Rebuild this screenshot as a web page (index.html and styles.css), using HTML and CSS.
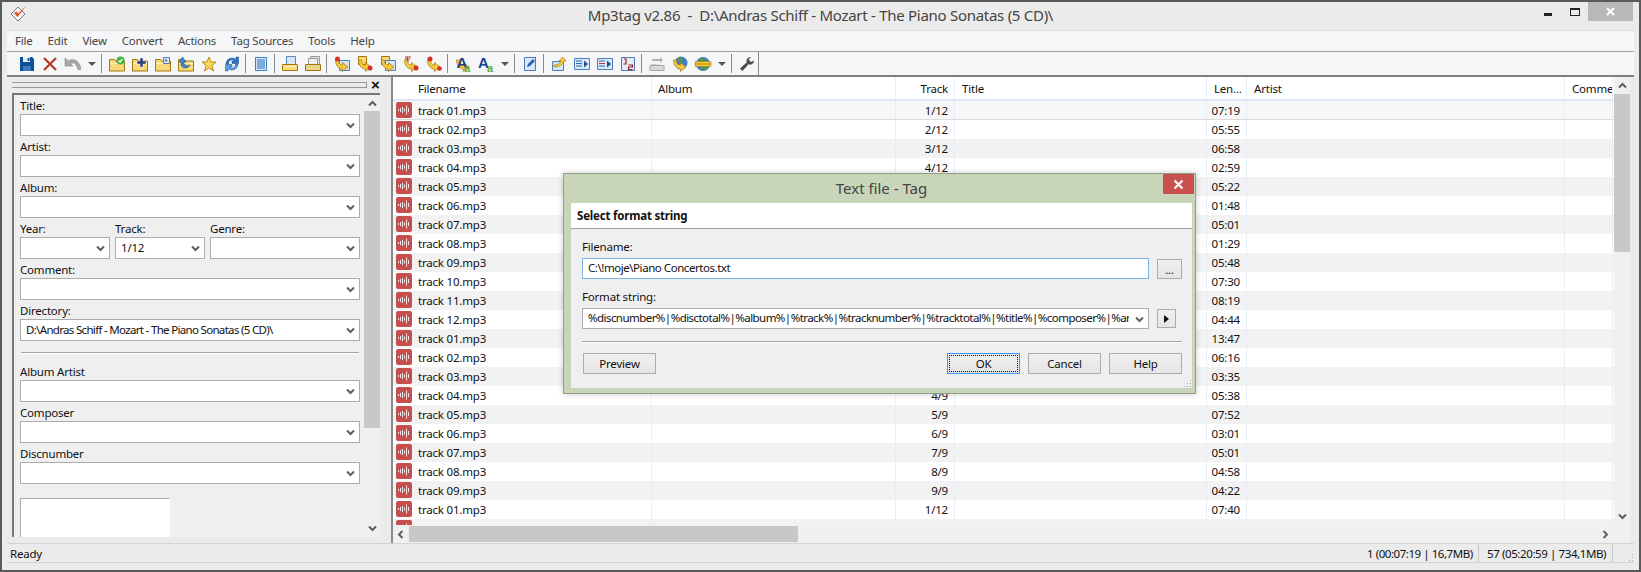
FILE: index.html
```html
<!DOCTYPE html>
<html lang="en">
<head>
    <meta charset="UTF-8">
    <title>Mp3tag v2.86</title>
    <link rel="stylesheet" href="styles.css">
</head>
<body>
    <svg class="defs" width="0" height="0">
        <symbol id="folder" viewBox="0 0 16 16"><path d="M.5 5V3.500h5l1 1.500h9v10H.5z" fill="#f8d978" stroke="#a5760e"/><path d="M1.500 7h13v1h-13z" fill="#fff2bd"/></symbol>
        <symbol id="page" viewBox="0 0 16 16"><path d="M5.500 4.500h10v10h-10z" fill="#d5e4f7" stroke="#4f7db8"/></symbol>
        <symbol id="arrow" viewBox="0 0 16 16"><path d="M1.500 4h3c0 3 1 5 4 5V6.500l5.500 4.500-5.500 4.500V13c-4 0-7-4-7-9z" fill="#f6c93a" stroke="#a5760e" stroke-width=".7"/></symbol>
        <symbol id="audio" viewBox="0 0 16 16"><rect width="16" height="16" rx="2" fill="#c44f4e"/><path d="M2.500 7v2M4.500 6v4M6.500 5v6M8.500 6.500v3M10.500 3.500v9M12.500 6v4" stroke="#fff" stroke-width="1" opacity=".85"/></symbol>
        <symbol id="chev" viewBox="0 0 9 7"><path d="M1 1.500l3.500 3.500 3.500-3.500" fill="none" stroke="#5f5f5f" stroke-width="2"/></symbol>
    </svg>

    <div class="window">
        <div class="titlebar">
            <svg class="app-icon" viewBox="0 0 18 18"><path d="M1 9l7-7 7 7-7 7z" fill="#f4f4f4" stroke="#777"/><path d="M4 8l3.500 4L16 1 8 8.500 6.500 6.500z" fill="#e2571d"/></svg>
            <div class="title">Mp3tag v2.86  -  D:\Andras Schiff - Mozart - The Piano Sonatas (5 CD)\</div>
            <div class="win-buttons">
                <span class="win-btn"><i class="min-mark"></i></span>
                <span class="win-btn"><i class="max-mark"></i></span>
                <span class="win-btn win-close"><svg width="11" height="11" viewBox="0 0 11 11"><path d="M2 2l7 7M9 2l-7 7" stroke="#fff" stroke-width="2"/></svg></span>
            </div>
        </div>

        <div class="inner">
            <div class="menubar">
                <span>File</span><span>Edit</span><span>View</span><span>Convert</span><span>Actions</span><span>Tag Sources</span><span>Tools</span><span>Help</span>
            </div>

            <div class="toolbar">
                <span class="tool"><svg viewBox="0 0 16 16"><path d="M1 1h12l2 2v12H1z" fill="#0f4f97"/><path d="M4 1h7v5H4z" fill="#e6eef7"/><path d="M8.500 2h2v3h-2z" fill="#0f4f97"/><path d="M4 10h8v5H4z" fill="#3c78bd"/></svg></span>
                <span class="tool"><svg viewBox="0 0 16 16"><path d="M2 2l12 12M14 2L2 14" stroke="#b4402c" stroke-width="2.400"/></svg></span>
                <span class="tool"><svg viewBox="0 0 16 16"><path d="M0 2v8h8L5.500 7.500C8 6 11.500 7 13 14l3-1C15 6 9 1 3.500 5z" fill="#a8a8a8" stroke="#8a8a8a" stroke-width=".6"/></svg></span>
                <span class="drop"></span>
                <span class="sep"></span>
                <span class="tool"><svg viewBox="0 0 16 16"><use href="#folder"/><circle cx="11.500" cy="4.500" r="4" fill="#3cb43c"/><path d="M9.500 4.500l1.500 1.500 2.500-3" fill="none" stroke="#fff" stroke-width="1.300"/></svg></span>
                <span class="tool"><svg viewBox="0 0 16 16"><use href="#folder"/><path d="M8 2h3v3h3v3h-3v3H8V8H5V5h3z" fill="#33407f" stroke="#fff" stroke-width=".4"/></svg></span>
                <span class="tool"><svg viewBox="0 0 16 16"><use href="#folder"/><path d="M8.500 1.500h6v6h-6z" fill="#d5e4f7" stroke="#4f7db8"/><path d="M10.500 3v3l2-1.500z" fill="#1b4f8f"/></svg></span>
                <span class="tool"><svg viewBox="0 0 16 16"><use href="#folder"/><path d="M1 6l3.500-5L8 6H6v2c1 2 4 2 6 1-1 2-3 3-5 3-2 0-4-2-4-4V6z" fill="#3f86cf" stroke="#174f8f" stroke-width=".6"/></svg></span>
                <span class="tool"><svg viewBox="0 0 16 16"><path d="M8 1l2 5h5l-4 3.500L12.500 15 8 11.700 3.500 15 5 9.500 1 6h5z" fill="#fbd85a" stroke="#b98a16"/></svg></span>
                <span class="tool"><svg viewBox="0 0 16 16"><path d="M2 8a6 6 0 0 1 10-4.500V1h2.500v6.500H8V5h2.500A3.500 3.500 0 0 0 4.500 8z" fill="#2e74c6" stroke="#12488c" stroke-width=".5"/><path d="M14 8a6 6 0 0 1-10 4.500V15H1.500V8.500H8V11H5.500a3.500 3.500 0 0 0 6-3z" fill="#5aa0e6" stroke="#12488c" stroke-width=".5"/></svg></span>
                <span class="sep"></span>
                <span class="tool"><svg viewBox="0 0 16 16"><path d="M2.500 1.500h11v13h-11z" fill="#d8e8fa" stroke="#3f7fc6"/><path d="M4 4h8M4 6h8M4 8h8M4 10h8M4 12h8" stroke="#2b6cb8"/></svg></span>
                <span class="sep"></span>
                <span class="tool"><svg viewBox="0 0 16 16"><path d="M4.500 .5h9v9h-9z" fill="#d5e4f7" stroke="#5c87bd"/><path d="M.5 8.500h15v6H.5z" fill="#f8d978" stroke="#a5760e"/><path d="M1.500 10h13v1h-13z" fill="#fff2bd"/></svg></span>
                <span class="tool"><svg viewBox="0 0 16 16"><path d="M5.500 .5h9v9h-9z" fill="#e4e4e4" stroke="#999"/><path d="M3.500 2.500h9v8h-9z" fill="#eee" stroke="#999"/><path d="M.5 8.500h15v6H.5z" fill="#e8d487" stroke="#a5760e"/></svg></span>
                <span class="sep"></span>
                <span class="tool"><svg viewBox="0 0 16 16"><use href="#page"/><use href="#arrow"/><circle cx="3.500" cy="3" r="2.500" fill="#d6322a"/></svg></span>
                <span class="tool"><svg viewBox="0 0 16 16"><path d="M1.500 .5h8v8h-8z" fill="#f8d978" stroke="#a5760e"/><use href="#arrow"/><circle cx="13" cy="12" r="2.500" fill="#d6322a"/></svg></span>
                <span class="tool"><svg viewBox="0 0 16 16"><path d="M1.500 .5h8v8h-8z" fill="#f8d978" stroke="#a5760e"/><use href="#page"/><use href="#arrow"/></svg></span>
                <span class="tool"><svg viewBox="0 0 16 16"><path d="M2 1h6M2 3h5M2 5h4M4.500 1v5" stroke="#a6402a"/><use href="#arrow"/><circle cx="13" cy="12" r="2.500" fill="#d6322a"/></svg></span>
                <span class="tool"><svg viewBox="0 0 16 16"><use href="#arrow"/><circle cx="4" cy="3" r="2.500" fill="#d6322a"/><circle cx="13.500" cy="12.500" r="2.300" fill="#d6322a"/></svg></span>
                <span class="sep"></span>
                <span class="tool"><svg viewBox="0 0 16 16"><use href="#arrow"/><text x="1.500" y="11.500" class="ico-big">A</text><text x="9" y="16" class="ico-small">a</text></svg></span>
                <span class="tool"><svg viewBox="0 0 16 16"><text x="0" y="12" class="ico-big">A</text><text x="9" y="16" class="ico-small">a</text></svg></span>
                <span class="drop"></span>
                <span class="sep"></span>
                <span class="tool"><svg viewBox="0 0 16 16"><path d="M2.500 1.500h11v13h-11z" fill="#d8e8fa" stroke="#4f7db8"/><path d="M5 11l1-3 5-5 2 2-5 5z" fill="#2462b0"/><path d="M12 1h2v2z" fill="#c8322a"/></svg></span>
                <span class="sep"></span>
                <span class="tool"><svg viewBox="0 0 16 16"><path d="M1.500 5.500h11v9h-11z" fill="#d5e4f7" stroke="#4f7db8"/><path d="M3 9c3 0 6-1 7-4H8l3.500-4L15 5h-2c-1 4-5 6-10 6z" fill="#f6c93a" stroke="#a5760e" stroke-width=".6"/></svg></span>
                <span class="tool"><svg viewBox="0 0 16 16"><path d="M.5 2.500h15v11H.5z" fill="#d8e8fa" stroke="#4f7db8"/><path d="M2 5h6M2 7.500h6M2 10h6" stroke="#2b6cb8"/><path d="M10 4.500v7l4-3.500z" fill="#1b4f8f"/></svg></span>
                <span class="tool"><svg viewBox="0 0 16 16"><path d="M.5 2.500h15v11H.5z" fill="#d8e8fa" stroke="#4f7db8"/><path d="M2 5h6M2 10h6" stroke="#2b6cb8"/><path d="M2 7.500h6" stroke="#c8322a"/><path d="M10 4.500v7l4-3.500z" fill="#1b4f8f"/></svg></span>
                <span class="tool"><svg viewBox="0 0 16 16"><path d="M1.500 1.500h13v13h-13z" fill="#e2ecf8" stroke="#4f7db8"/><path d="M4 3h2v5M3.500 8h3" fill="none" stroke="#9c1f1f" stroke-width="1.200"/><path d="M8.500 9h4v2h-4v2.500h4" fill="none" stroke="#9c1f1f" stroke-width="1.200"/></svg></span>
                <span class="sep"></span>
                <span class="tool"><svg viewBox="0 0 16 16"><path d="M1 9.500h14v5H1z" fill="#d8d8d8" stroke="#a8a8a8"/><path d="M3 3h8V1l3 3-3 3V5H3zM13 9H5v2L2 8z" fill="#b4b4b4"/></svg></span>
                <span class="tool"><svg viewBox="0 0 16 16"><circle cx="9" cy="7" r="6.500" fill="#3f7fc6"/><path d="M6 2c3-1 5 0 5 2s-3 1-3 3 3 1 4 3-2 3-3 3z" fill="#4f9a3f"/><use href="#arrow"/></svg></span>
                <span class="tool"><svg viewBox="0 0 16 16"><circle cx="8" cy="8" r="7" fill="#3f7fc6"/><path d="M4 2.500c3-1 6 0 6 2s-3 1-3 3 4 1 5 3-3 4-5 4z" fill="#4f9a3f"/><path d="M0 8h16V5.500H0zM16 8v2.500H0V8z" fill="#f6c93a" stroke="#a5760e" stroke-width=".5"/></svg></span>
                <span class="drop"></span>
                <span class="sep"></span>
                <span class="tool"><svg viewBox="0 0 16 16"><path d="M15 4.500a4 4 0 0 1-5.500 3.800L3.500 15 1 12.500l6.700-6A4 4 0 0 1 12 1L9.500 3.500 12 6z" fill="#4a4a4a"/></svg></span>
                <span class="sep last"></span>
            </div>

            <div class="workspace">
                <div class="side">
                    <div class="gripper"><span class="grip-lines"></span><span class="grip-x">×</span></div>
                    <div class="tag-panel">
                        <div class="tag-form">
                            <div class="field"><label>Title:</label><div class="combo"><svg><use href="#chev"/></svg></div></div>
                            <div class="field"><label>Artist:</label><div class="combo"><svg><use href="#chev"/></svg></div></div>
                            <div class="field"><label>Album:</label><div class="combo"><svg><use href="#chev"/></svg></div></div>
                            <div class="triple">
                                <div class="field"><label>Year:</label><div class="combo"><svg><use href="#chev"/></svg></div></div>
                                <div class="field"><label>Track:</label><div class="combo">1/12<svg><use href="#chev"/></svg></div></div>
                                <div class="field"><label>Genre:</label><div class="combo"><svg><use href="#chev"/></svg></div></div>
                            </div>
                            <div class="field"><label>Comment:</label><div class="combo"><svg><use href="#chev"/></svg></div></div>
                            <div class="field"><label>Directory:</label><div class="combo path">D:\Andras Schiff - Mozart - The Piano Sonatas (5 CD)\<svg><use href="#chev"/></svg></div></div>
                            <div class="rule"></div>
                            <div class="field"><label>Album Artist</label><div class="combo"><svg><use href="#chev"/></svg></div></div>
                            <div class="field"><label>Composer</label><div class="combo"><svg><use href="#chev"/></svg></div></div>
                            <div class="field"><label>Discnumber</label><div class="combo"><svg><use href="#chev"/></svg></div></div>
                            <div class="cover"></div>
                        </div>
                        <div class="vscroll panel-scroll">
                            <svg class="up"><use href="#chev"/></svg>
                            <div class="thumb"></div>
                            <svg><use href="#chev"/></svg>
                        </div>
                    </div>
                </div>

                <div class="filelist">
                    <div class="list-main">
                        <div class="list-view">
                            <div class="row head"><span class="cell name">Filename</span><span class="cell">Album</span><span class="cell num">Track</span><span class="cell">Title</span><span class="cell">Len...</span><span class="cell">Artist</span><span class="cell">Comment</span></div>
                            <div class="rows">
                                <div class="row current"><span class="cell name"><svg><use href="#audio"/></svg>track 01.mp3</span><span class="cell"></span><span class="cell num">1/12</span><span class="cell"></span><span class="cell num">07:19</span><span class="cell"></span><span class="cell"></span></div>
                                <div class="row"><span class="cell name"><svg><use href="#audio"/></svg>track 02.mp3</span><span class="cell"></span><span class="cell num">2/12</span><span class="cell"></span><span class="cell num">05:55</span><span class="cell"></span><span class="cell"></span></div>
                                <div class="row"><span class="cell name"><svg><use href="#audio"/></svg>track 03.mp3</span><span class="cell"></span><span class="cell num">3/12</span><span class="cell"></span><span class="cell num">06:58</span><span class="cell"></span><span class="cell"></span></div>
                                <div class="row"><span class="cell name"><svg><use href="#audio"/></svg>track 04.mp3</span><span class="cell"></span><span class="cell num">4/12</span><span class="cell"></span><span class="cell num">02:59</span><span class="cell"></span><span class="cell"></span></div>
                                <div class="row"><span class="cell name"><svg><use href="#audio"/></svg>track 05.mp3</span><span class="cell"></span><span class="cell num">5/12</span><span class="cell"></span><span class="cell num">05:22</span><span class="cell"></span><span class="cell"></span></div>
                                <div class="row"><span class="cell name"><svg><use href="#audio"/></svg>track 06.mp3</span><span class="cell"></span><span class="cell num">6/12</span><span class="cell"></span><span class="cell num">01:48</span><span class="cell"></span><span class="cell"></span></div>
                                <div class="row"><span class="cell name"><svg><use href="#audio"/></svg>track 07.mp3</span><span class="cell"></span><span class="cell num">7/12</span><span class="cell"></span><span class="cell num">05:01</span><span class="cell"></span><span class="cell"></span></div>
                                <div class="row"><span class="cell name"><svg><use href="#audio"/></svg>track 08.mp3</span><span class="cell"></span><span class="cell num">8/12</span><span class="cell"></span><span class="cell num">01:29</span><span class="cell"></span><span class="cell"></span></div>
                                <div class="row"><span class="cell name"><svg><use href="#audio"/></svg>track 09.mp3</span><span class="cell"></span><span class="cell num">9/12</span><span class="cell"></span><span class="cell num">05:48</span><span class="cell"></span><span class="cell"></span></div>
                                <div class="row"><span class="cell name"><svg><use href="#audio"/></svg>track 10.mp3</span><span class="cell"></span><span class="cell num">10/12</span><span class="cell"></span><span class="cell num">07:30</span><span class="cell"></span><span class="cell"></span></div>
                                <div class="row"><span class="cell name"><svg><use href="#audio"/></svg>track 11.mp3</span><span class="cell"></span><span class="cell num">11/12</span><span class="cell"></span><span class="cell num">08:19</span><span class="cell"></span><span class="cell"></span></div>
                                <div class="row"><span class="cell name"><svg><use href="#audio"/></svg>track 12.mp3</span><span class="cell"></span><span class="cell num">12/12</span><span class="cell"></span><span class="cell num">04:44</span><span class="cell"></span><span class="cell"></span></div>
                                <div class="row"><span class="cell name"><svg><use href="#audio"/></svg>track 01.mp3</span><span class="cell"></span><span class="cell num">1/9</span><span class="cell"></span><span class="cell num">13:47</span><span class="cell"></span><span class="cell"></span></div>
                                <div class="row"><span class="cell name"><svg><use href="#audio"/></svg>track 02.mp3</span><span class="cell"></span><span class="cell num">2/9</span><span class="cell"></span><span class="cell num">06:16</span><span class="cell"></span><span class="cell"></span></div>
                                <div class="row"><span class="cell name"><svg><use href="#audio"/></svg>track 03.mp3</span><span class="cell"></span><span class="cell num">3/9</span><span class="cell"></span><span class="cell num">03:35</span><span class="cell"></span><span class="cell"></span></div>
                                <div class="row"><span class="cell name"><svg><use href="#audio"/></svg>track 04.mp3</span><span class="cell"></span><span class="cell num">4/9</span><span class="cell"></span><span class="cell num">05:38</span><span class="cell"></span><span class="cell"></span></div>
                                <div class="row"><span class="cell name"><svg><use href="#audio"/></svg>track 05.mp3</span><span class="cell"></span><span class="cell num">5/9</span><span class="cell"></span><span class="cell num">07:52</span><span class="cell"></span><span class="cell"></span></div>
                                <div class="row"><span class="cell name"><svg><use href="#audio"/></svg>track 06.mp3</span><span class="cell"></span><span class="cell num">6/9</span><span class="cell"></span><span class="cell num">03:01</span><span class="cell"></span><span class="cell"></span></div>
                                <div class="row"><span class="cell name"><svg><use href="#audio"/></svg>track 07.mp3</span><span class="cell"></span><span class="cell num">7/9</span><span class="cell"></span><span class="cell num">05:01</span><span class="cell"></span><span class="cell"></span></div>
                                <div class="row"><span class="cell name"><svg><use href="#audio"/></svg>track 08.mp3</span><span class="cell"></span><span class="cell num">8/9</span><span class="cell"></span><span class="cell num">04:58</span><span class="cell"></span><span class="cell"></span></div>
                                <div class="row"><span class="cell name"><svg><use href="#audio"/></svg>track 09.mp3</span><span class="cell"></span><span class="cell num">9/9</span><span class="cell"></span><span class="cell num">04:22</span><span class="cell"></span><span class="cell"></span></div>
                                <div class="row"><span class="cell name"><svg><use href="#audio"/></svg>track 01.mp3</span><span class="cell"></span><span class="cell num">1/12</span><span class="cell"></span><span class="cell num">07:40</span><span class="cell"></span><span class="cell"></span></div>
                                <div class="row"><span class="cell name"><svg><use href="#audio"/></svg>track 02.mp3</span><span class="cell"></span><span class="cell num">2/12</span><span class="cell"></span><span class="cell num">07:50</span><span class="cell"></span><span class="cell"></span></div>
                            </div>
                        </div>
                        <div class="vscroll list-scroll">
                            <svg class="up"><use href="#chev"/></svg>
                            <div class="thumb"></div>
                            <svg><use href="#chev"/></svg>
                        </div>
                    </div>
                    <div class="hscroll">
                        <svg class="left"><use href="#chev"/></svg>
                        <div class="hthumb"></div>
                        <svg class="right"><use href="#chev"/></svg>
                    </div>
                </div>
            </div>

            <div class="statusbar">
                <span class="status-main">Ready</span>
                <span class="status-pane sel">1 (00:07:19 | 16,7MB)</span>
                <span class="status-pane total">57 (05:20:59 | 734,1MB)</span>
                <span class="size-grip"></span>
            </div>
        </div>

        <div class="dialog">
            <div class="dlg-title">
                <span class="dlg-caption">Text file - Tag</span>
                <span class="dlg-close"><svg width="11" height="11" viewBox="0 0 11 11"><path d="M1.500 1.500l8 8M9.500 1.500l-8 8" stroke="#fff" stroke-width="2"/></svg></span>
            </div>
            <div class="dlg-body">
                <div class="dlg-head">Select format string</div>
                <div class="dlg-content">
                    <label class="dlg-label">Filename:</label>
                    <div class="dlg-row">
                        <div class="dlg-input focus">C:\!moje\Piano Concertos.txt</div>
                        <span class="btn small">...</span>
                    </div>
                    <label class="dlg-label second">Format string:</label>
                    <div class="dlg-row">
                        <div class="dlg-input combo-input"><span class="clip">%discnumber%|%disctotal%|%album%|%track%|%tracknumber%|%tracktotal%|%title%|%composer%|%artist%</span><svg><use href="#chev"/></svg></div>
                        <span class="btn play"><i></i></span>
                    </div>
                    <div class="rule dlg-rule"></div>
                    <div class="dlg-buttons">
                        <span class="btn">Preview</span>
                        <span class="btn default push"><span>OK</span></span>
                        <span class="btn">Cancel</span>
                        <span class="btn">Help</span>
                    </div>
                    <span class="size-grip dlg-grip"></span>
                </div>
            </div>
        </div>
    </div>
</body>
</html>
```

FILE: styles.css
```css
* {
    margin: 0;
    padding: 0;
    box-sizing: border-box;
}

html, body {
    width: 1641px;
    height: 572px;
    overflow: hidden;
}

body {
    font-family: "Noto Sans", "Open Sans", sans-serif;
    font-size: 11.5px;
    letter-spacing: -0.2px;
    color: #111;
    background-color: #ebebeb;
}

.defs {
    position: absolute;
}

.window {
    position: relative;
    width: 1641px;
    height: 572px;
    border: 2px solid #5a5a5a;
    background-color: #ebebeb;
    display: flex;
    flex-direction: column;
}

.titlebar {
    height: 28px;
    flex: none;
    display: grid;
    grid-template-columns: 1fr auto 1fr;
    background-color: #ebebeb;
}

.app-icon {
    width: 18px;
    height: 18px;
    margin: 3px 0 0 8px;
}

.title {
    font-size: 15px;
    letter-spacing: -0.28px;
    line-height: 26px;
    color: #444;
    white-space: pre;
}

.win-buttons {
    display: flex;
    justify-content: flex-end;
    padding-right: 6px;
}

.win-btn {
    width: 27px;
    height: 19px;
    display: flex;
    align-items: center;
    justify-content: center;
}

.win-close {
    width: 45px;
    background-color: #b8b8b8;
}

.min-mark {
    width: 8px;
    height: 3px;
    margin-top: 6px;
    background-color: #222;
}

.max-mark {
    width: 10px;
    height: 8px;
    border: 1px solid #222;
    border-top-width: 2px;
}

.inner {
    flex: 1;
    min-height: 0;
    margin: 0 5px 7px;
    display: flex;
    flex-direction: column;
}

/* menu and toolbar */
.menubar {
    height: 22px;
    flex: none;
    display: flex;
    gap: 15px;
    padding: 0 0 2px 8px;
    align-items: center;
    background-color: #f5f6f7;
    border-top: 1px solid #dcdcdc;
    border-bottom: 1px solid #a0a0a0;
    color: #444;
}

.toolbar {
    height: 25px;
    flex: none;
    display: flex;
    align-items: flex-start;
    padding-left: 8px;
    background-color: #f5f6f7;
    border-bottom: 2px solid #808080;
}

.tool {
    width: 23px;
    height: 23px;
    display: flex;
    align-items: center;
    justify-content: center;
}

.tool svg {
    width: 16px;
    height: 16px;
    overflow: visible;
}

.ico-big {
    font-family: "Liberation Sans", sans-serif;
    font-size: 15px;
    font-weight: bold;
    letter-spacing: 0;
    fill: #14408c;
}

.ico-small {
    font-family: "Liberation Sans", sans-serif;
    font-size: 11px;
    font-weight: bold;
    letter-spacing: 0;
    fill: #5aa83a;
}

.drop {
    width: 15px;
    height: 23px;
    display: flex;
    align-items: center;
    justify-content: center;
}

.drop::before {
    content: "";
    border-left: 4px solid transparent;
    border-right: 4px solid transparent;
    border-top: 4px solid #555;
}

.sep {
    width: 6px;
    height: 23px;
}

.sep::before {
    content: "";
    display: block;
    width: 1px;
    height: 19px;
    margin: 2px 0 0 2px;
    background-color: #8c8c8c;
}

.sep.last {
    width: 1px;
}

.sep.last::before {
    margin: 0;
    height: 23px;
}

/* workspace */
.workspace {
    flex: 1;
    min-height: 0;
    display: flex;
}

.side {
    width: 384px;
    flex: none;
    padding: 0 11px 6px 5px;
    display: flex;
    flex-direction: column;
}

.gripper {
    height: 16px;
    flex: none;
    display: flex;
    align-items: center;
    gap: 4px;
}

.grip-lines {
    width: 355px;
    height: 6px;
    border-top: 1px solid #999;
    border-bottom: 1px solid #999;
    border-right: 1px solid #999;
}

.grip-x {
    font-family: "Liberation Sans", sans-serif;
    font-size: 15px;
    font-weight: bold;
    line-height: 14px;
    color: #111;
}

.tag-panel {
    flex: 1;
    min-height: 0;
    display: flex;
    background-color: #efefef;
    border-top: 2px solid #777;
    border-left: 2px solid #777;
    overflow: hidden;
}

.tag-form {
    flex: 1;
    min-width: 0;
    padding: 0 4px 0 6px;
}

.field label {
    display: block;
    height: 19px;
    padding-top: 3px;
    line-height: 16px;
}

.combo {
    position: relative;
    height: 22px;
    line-height: 20px;
    padding-left: 5px;
    background-color: #fff;
    border: 1px solid #acacac;
    white-space: nowrap;
}

.combo.path {
    letter-spacing: -0.68px;
}

.combo svg, .combo-input svg {
    position: absolute;
    right: 4px;
    top: 7px;
    width: 9px;
    height: 7px;
}

.triple {
    display: grid;
    grid-template-columns: 90px 90px 150px;
    gap: 5px;
}

.rule {
    height: 2px;
    background-color: #a3a3a3;
    border-bottom: 1px solid #fff;
}

.tag-form .rule {
    margin: 11px 1px 7px;
}

.cover {
    width: 150px;
    height: 60px;
    margin-top: 14px;
    background-color: #fff;
    border: 1px solid #acacac;
    border-right-color: #fff;
}

.vscroll {
    width: 16px;
    flex: none;
    display: flex;
    flex-direction: column;
    align-items: center;
    background-color: #f0f0f0;
}

.vscroll svg {
    width: 9px;
    height: 7px;
    margin: 5px 0;
    flex: none;
}

.vscroll svg.up {
    transform: rotate(180deg);
}

.thumb {
    width: 100%;
    margin-bottom: auto;
    flex: none;
    background-color: #c8c8c8;
}

.panel-scroll .up {
    margin-bottom: 4px;
}

.panel-scroll .thumb {
    height: 317px;
}

.list-scroll .thumb {
    height: 158px;
}

/* file list */
.filelist {
    flex: 1;
    min-width: 0;
    margin-right: 4px;
    display: flex;
    flex-direction: column;
    border-left: 2px solid #8a8a8a;
    background-color: #f0f0f0;
}

.list-main {
    flex: 1;
    min-height: 0;
    display: flex;
}

.list-view {
    flex: 1;
    min-width: 0;
    display: flex;
    flex-direction: column;
    overflow: hidden;
    background-color: #fff;
}

.rows {
    flex: 1;
    min-height: 0;
    overflow: hidden;
}

.row {
    display: grid;
    grid-template-columns: 259px 244px 59px 252px 40px 318px 48px;
    height: 19px;
    line-height: 19px;
}

.rows .row:nth-child(odd) {
    background-color: #f2f2f2;
}

.rows .row.current {
    background-color: #f7f7f7;
    border-bottom: 1px solid #dcdcdc;
}

.row.head {
    height: 24px;
    line-height: 23px;
    background-color: #fff;
    border-bottom: 2px solid #dfe8f2;
}

.cell {
    padding-left: 6px;
    white-space: nowrap;
    overflow: hidden;
    border-right: 1px solid #e6eff9;
}

.head .cell:nth-child(n+4) {
    padding-left: 7px;
}

.cell.num {
    padding: 0 6px 0 0;
    text-align: right;
}

.cell.name {
    display: flex;
    padding-left: 3px;
}

.cell.name svg {
    width: 16px;
    height: 16px;
    margin: 1px 6px 0 0;
    flex: none;
}

.head .cell.name {
    padding-left: 25px;
}

.hscroll {
    height: 18px;
    flex: none;
    padding: 1px 0;
    display: flex;
    align-items: center;
    background-color: #f0f0f0;
}

.hscroll svg {
    width: 9px;
    height: 7px;
    flex: none;
}

.hscroll .left {
    transform: rotate(90deg);
    margin: 0 4px 0 3px;
}

.hscroll .right {
    transform: rotate(-90deg);
    margin-left: auto;
    margin-right: 20px;
}

.hthumb {
    width: 389px;
    height: 16px;
    background-color: #c8c8c8;
}

/* status bar */
.statusbar {
    height: 20px;
    flex: none;
    display: flex;
    line-height: 20px;
    border-top: 1px solid #d4d4d4;
    border-bottom: 1px solid #d4d4d4;
}

.status-main {
    flex: 1;
    min-width: 0;
    padding-left: 3px;
}

.status-pane {
    flex: none;
    border-right: 1px solid #c8c8c8;
    height: 100%;
    overflow: hidden;
    white-space: nowrap;
}

.status-pane.sel {
    width: 115px;
    padding-left: 3px;
    letter-spacing: -0.45px;
}

.status-pane.total {
    width: 134px;
    padding-left: 8px;
    letter-spacing: -0.4px;
}

.size-grip {
    width: 21px;
    height: 100%;
    background-image: radial-gradient(#a8a8a8 1px, transparent 1px);
    background-size: 3px 3px;
    background-position: right bottom;
    clip-path: polygon(100% 40%, 100% 100%, 70% 100%);
}

/* dialog */
.dialog {
    position: absolute;
    left: 561px;
    top: 171px;
    width: 633px;
    height: 221px;
    background-color: #c8d5b9;
    border: 1px solid #909e85;
    box-shadow: 0 0 6px rgba(0, 0, 0, 0.2);
    display: flex;
    flex-direction: column;
}

.dlg-title {
    height: 29px;
    flex: none;
    padding-left: 4px;
    position: relative;
    text-align: center;
}

.dlg-caption {
    font-size: 15px;
    letter-spacing: 0;
    line-height: 28px;
    color: #444;
}

.dlg-close {
    position: absolute;
    top: 0;
    right: 1px;
    width: 31px;
    height: 20px;
    background-color: #c75050;
    display: flex;
    align-items: center;
    justify-content: center;
}

.dlg-body {
    flex: 1;
    margin: 0 3px 5px 7px;
    background-color: #efefef;
    display: flex;
    flex-direction: column;
}

.dlg-head {
    height: 26px;
    flex: none;
    padding-left: 6px;
    font-weight: bold;
    line-height: 25px;
    background-color: #fff;
    border-bottom: 1px solid #a0a0a0;
}

.dlg-content {
    position: relative;
    flex: 1;
    padding: 9px 10px 0 11px;
}

.dlg-label {
    display: block;
    height: 20px;
    line-height: 18px;
}

.dlg-label.second {
    margin-top: 9px;
}

.dlg-row {
    display: flex;
    gap: 8px;
}

.dlg-input {
    position: relative;
    width: 567px;
    height: 21px;
    flex: none;
    padding-left: 5px;
    line-height: 18px;
    letter-spacing: -0.45px;
    background-color: #fff;
    border: 1px solid #acacac;
}

.dlg-input.focus {
    border-color: #7eb4ea;
}

.combo-input {
    letter-spacing: -0.55px;
}

.clip {
    display: block;
    width: 541px;
    white-space: nowrap;
    overflow: hidden;
}

.btn {
    width: 73px;
    height: 21px;
    flex: none;
    display: flex;
    align-items: center;
    justify-content: center;
    border: 1px solid #acacac;
    background-image: linear-gradient(#f0f0f0, #e5e5e5);
}

.btn.small {
    width: 25px;
    height: 20px;
    margin-top: 1px;
}

.btn.play {
    width: 19px;
    height: 19px;
    margin-top: 1px;
}

.btn.play i {
    border-left: 5px solid #111;
    border-top: 4px solid transparent;
    border-bottom: 4px solid transparent;
}

.dlg-rule {
    margin-top: 12px;
}

.dlg-buttons {
    display: flex;
    gap: 8px;
    margin-top: 10px;
    padding-left: 1px;
}

.push {
    margin-left: auto;
}

.btn.default {
    padding: 1px;
    border-color: #3399ff;
}

.btn.default span {
    width: 100%;
    height: 100%;
    display: flex;
    align-items: center;
    justify-content: center;
    border: 1px dotted #111;
}

.dlg-grip {
    position: absolute;
    right: 0;
    bottom: 0;
    width: 10px;
    height: 11px;
    clip-path: polygon(100% 0, 100% 100%, 0 100%);
}
```
